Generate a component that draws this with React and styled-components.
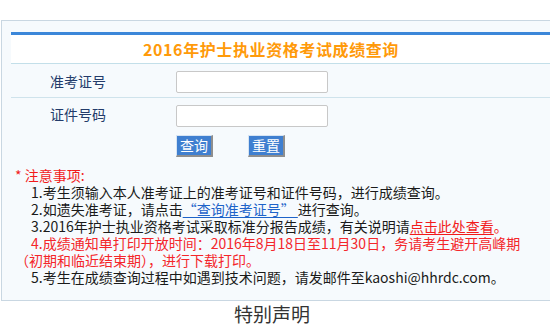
import React from "react";
import styled, { createGlobalStyle } from "styled-components";

const Global = createGlobalStyle`
  html, body { margin: 0; padding: 0; background: #fff; overflow: hidden; }
  body { font-family: "Noto Sans CJK SC", "Noto Sans", sans-serif; }
`;

const Page = styled.div`
  padding-top: 20px;
  padding-left: 1px;
  width: 620px;
`;

const Box = styled.div`
  border: 1px solid #c9d7e2;
  background: #f6fafd;
  padding: 11px 0 14px 9px;
`;

const Table = styled.div`
  border-top: 3px solid #3b87d9;
  width: 600px;
`;

const TitleRow = styled.div`
  height: 28px;
  background: #fff;
  border-bottom: 1px solid #c3dfe9;
  display: flex;
  align-items: center;
  padding-left: 132px;
  font-size: 16px;
  font-weight: bold;
  color: #ff9a0a;
  letter-spacing: 0.6px;
`;

const FormRow = styled.div`
  display: grid;
  grid-template-columns: 165px 1fr;
  align-items: center;
  height: ${(p) => p.$h}px;
  border-bottom: ${(p) => (p.$line ? "1px solid #cfe3ec" : "none")};
`;

const Label = styled.div`
  padding-left: 39px;
  font-size: 14px;
  color: #233b6a;
`;

const Input = styled.input`
  width: 152px;
  height: 22px;
  box-sizing: border-box;
  border: 1px solid #c8c8c8;
  border-radius: 2px;
  background: #fff;
  margin: 0;
  padding: 0 3px;
  outline: none;
`;

const ButtonRow = styled.div`
  display: flex;
  gap: 35px;
  padding: 5px 0 0 165px;
  height: 22px;
`;

const Btn = styled.button`
  width: 37px;
  height: 22px;
  box-sizing: border-box;
  margin: 0;
  padding: 0 0 1px;
  background: #3f7fd0;
  color: #fff;
  font-family: "Noto Sans CJK SC", sans-serif;
  font-size: 14px;
  line-height: 18px;
  border: 0;
  border-top: 1px solid #d6e4f3;
  border-left: 1px solid #d6e4f3;
  border-right: 2px solid #8e8e8e;
  border-bottom: 2px solid #8e8e8e;
  cursor: pointer;
`;

const Notes = styled.div`
  padding: 10px 0 0 4px;
  font-size: 14px;
  line-height: 17px;
  color: #1a1a1a;
  white-space: nowrap;
`;

const Line = styled.div`
  color: ${(p) => p.$color || "#1a1a1a"};
  padding-left: ${(p) => p.$indent || 0}px;
`;

const Link = styled.a`
  color: ${(p) => p.$color};
  text-decoration: underline;
  text-underline-offset: 2px;
  cursor: pointer;
`;

const Declare = styled.div`
  width: 542px;
  text-align: center;
  font-size: 19px;
  color: #333;
  padding-top: 0;
  line-height: 26px;
`;

export default function App() {
  return (
    <>
      <Global />
      <Page>
        <Box>
          <Table>
            <TitleRow>2016年护士执业资格考试成绩查询</TitleRow>
            <FormRow $h={33} $line>
              <Label>准考证号</Label>
              <div><Input type="text" /></div>
            </FormRow>
            <FormRow $h={32}>
              <Label>证件号码</Label>
              <div><Input type="text" /></div>
            </FormRow>
            <ButtonRow>
              <Btn type="button">查询</Btn>
              <Btn type="button">重置</Btn>
            </ButtonRow>
            <Notes>
              <Line $color="#f21b1b">* 注意事项:</Line>
              <Line $indent={16}>1.考生须输入本人准考证上的准考证号和证件号码，进行成绩查询。</Line>
              <Line $indent={16}>
                2.如遗失准考证，请点击<Link $color="#1d63c9">“查询准考证号” </Link>进行查询。
              </Line>
              <Line $indent={16}>
                3.2016年护士执业资格考试采取标准分报告成绩，有关说明请<Link $color="#f21b1b">点击此处查看</Link><span style={{ color: "#f21b1b" }}>。</span>
              </Line>
              <Line $indent={16} $color="#f4262a">
                4.成绩通知单打印开放时间：2016年8月18日至11月30日，务请考生避开高峰期
              </Line>
              <Line $color="#f4262a">（初期和临近结束期），进行下载打印。</Line>
              <Line $indent={16}>5.考生在成绩查询过程中如遇到技术问题，请发邮件至kaoshi@hhrdc.com。</Line>
            </Notes>
          </Table>
        </Box>
        <Declare>特别声明</Declare>
      </Page>
    </>
  );
}
